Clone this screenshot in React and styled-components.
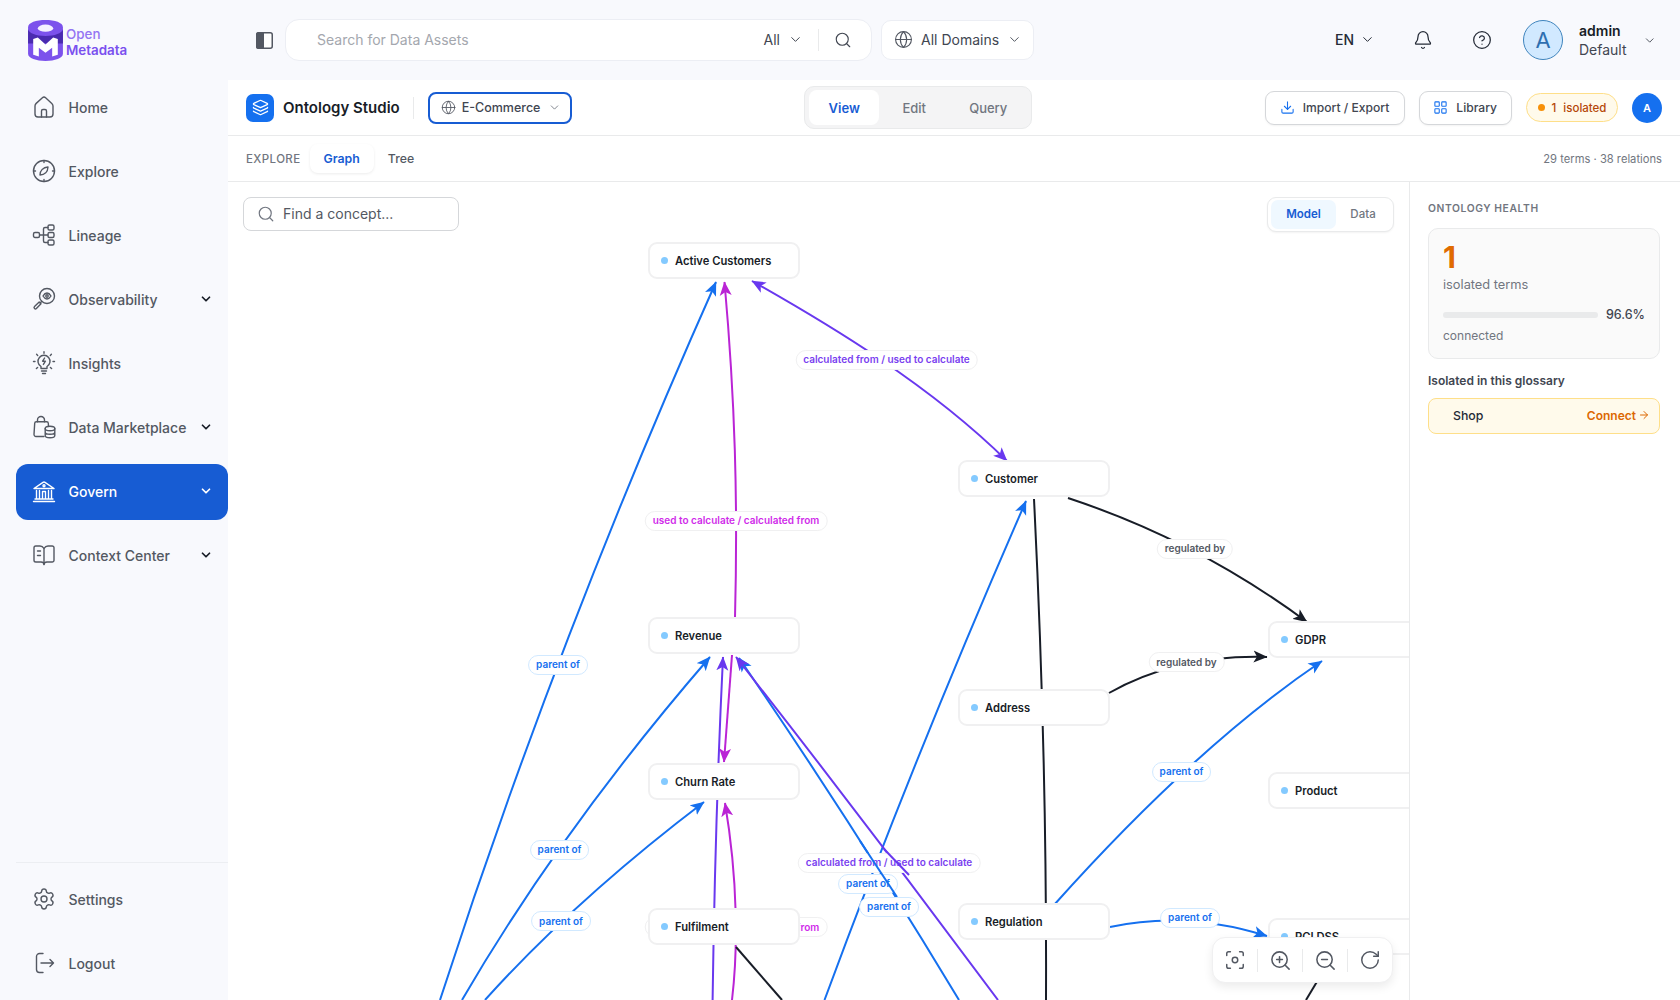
import React from "react";
import styled, { createGlobalStyle } from "styled-components";
import {
  ArrowRight,
  ChevronDown,
  CircleHelp,
  Download,
  Focus,
  Globe,
  Bell,
  Layers,
  LayoutGrid,
  RotateCw,
  Search,
  Settings,
  ZoomIn,
  ZoomOut,
} from "lucide-react";

const BLUE = "#1570ef";
const PURPLE = "#6938ef";
const MAGENTA = "#ba24d5";
const INK = "#181d27";

// graph coordinates are page pixels, the canvas starts here
const ORIGIN_X = 228;
const ORIGIN_Y = 182;

const GlobalStyle = createGlobalStyle`
  html, body {
    margin: 0;
    padding: 0;
    background: #f8f9fd;
    font-family: Inter, "Noto Sans", sans-serif;
    color: ${INK};
  }
  * { box-sizing: border-box; }
`;

const Shell = styled.div`
  display: flex;
  width: 1680px;
  height: 1000px;
  overflow: hidden;
  background: #f8f9fd;
`;

const Sidebar = styled.aside`
  width: 228px;
  flex: none;
  display: flex;
  flex-direction: column;
  padding-bottom: 9px;
`;

const Brand = styled.div`
  height: 80px;
  display: flex;
  align-items: center;
  gap: 3px;
  padding-left: 28px;
  flex: none;
`;

const BrandText = styled.div`
  display: flex;
  flex-direction: column;
  margin-top: 3px;
  font-size: 13.4px;
  line-height: 16px;
  font-weight: 600;
  color: #7a50ef;
  & > span:first-child { color: #9474f3; font-weight: 500; }
`;

const NavList = styled.nav`
  flex: 1;
  display: flex;
  flex-direction: column;
  gap: 8px;
  padding-left: 16px;
`;

const FootList = styled(NavList)`
  flex: none;
  padding-left: 0;
  padding-top: 8px;
  margin-left: 16px;
  border-top: 1px solid #eceef2;
`;

const NavItem = styled.a`
  height: 56px;
  flex: none;
  display: flex;
  align-items: center;
  gap: 12.5px;
  padding: 0 15px ${(p) => p.$lift || 0}px 16px;
  border-radius: 12px;
  font-size: 14px;
  font-weight: 500;
  color: ${(p) => (p.$active ? "#fff" : "#535862")};
  background: ${(p) => (p.$active ? "#175cd3" : "transparent")};
  & > svg { flex: none; }
  & > svg:last-child:not(:first-child) {
    margin-left: auto;
    color: ${(p) => (p.$active ? "#fff" : INK)};
  }
`;

const Column = styled.div`
  flex: 1;
  min-width: 0;
  display: flex;
  flex-direction: column;
`;

const TopBar = styled.header`
  height: 80px;
  flex: none;
  display: flex;
  align-items: center;
  padding: 0 24px 0 28px;
`;

const PanelToggle = styled.span`
  display: flex;
  margin-right: 12px;
`;

const SearchBox = styled.div`
  width: 587px;
  height: 42px;
  display: flex;
  align-items: center;
  padding: 0 19px 0 31px;
  background: #fff;
  border: 1px solid #eceef4;
  border-radius: 14px;
  font-size: 14px;
`;

const Placeholder = styled.span`
  color: #a4a7ae;
  margin-right: auto;
  padding-bottom: 2px;
`;

const ScopeSelect = styled.span`
  display: flex;
  align-items: center;
  gap: 8px;
  color: #414651;
  padding: 0 15px 2px 0;
  border-right: 1px solid #e9eaeb;
  height: 22px;
  margin-right: 15px;
`;

const DomainSelect = styled.div`
  width: 153px;
  height: 40px;
  margin-left: 9px;
  display: flex;
  align-items: center;
  gap: 8px;
  padding: 0 0 2px 12px;
  background: #fff;
  border: 1px solid #eceef4;
  border-radius: 10px;
  font-size: 14px;
  color: #414651;
`;

const TopRight = styled.div`
  margin-left: auto;
  display: flex;
  align-items: center;
  gap: 23px;
`;

const LangSelect = styled.span`
  width: 47px;
  display: flex;
  align-items: center;
  gap: 6px;
  padding-bottom: 2px;
  font-size: 14px;
  font-weight: 500;
  color: #252b37;
`;

const IconButton = styled.span`
  width: 36px;
  display: flex;
  justify-content: center;
  color: #252b37;
`;

const UserBlock = styled.div`
  width: 133px;
  display: flex;
  align-items: center;
  gap: 16px;
  & > svg:last-child { margin-left: auto; color: #414651; }
`;

const UserAvatar = styled.span`
  width: 40px;
  height: 40px;
  flex: none;
  display: flex;
  align-items: center;
  justify-content: center;
  border-radius: 50%;
  background: #d1e9ff;
  border: 1px solid #3f84bd;
  color: #2e6fb0;
  font-size: 22px;
`;

const UserName = styled.div`
  font-size: 14px;
  line-height: 19px;
  color: #414651;
  & > strong { display: block; font-weight: 600; color: ${INK}; }
`;

const Main = styled.main`
  flex: 1;
  min-height: 0;
  display: flex;
  flex-direction: column;
  background: #fff;
`;

const Toolbar = styled.div`
  height: 56px;
  flex: none;
  display: flex;
  align-items: center;
  justify-content: space-between;
  padding: 0 18px;
  border-bottom: 1px solid #e9eaeb;
`;

const ToolGroup = styled.div`
  display: flex;
  align-items: center;
  gap: ${(p) => p.$gap || 14}px;
`;

const StudioMark = styled.span`
  width: 28px;
  height: 28px;
  display: flex;
  align-items: center;
  justify-content: center;
  border-radius: 7px;
  background: ${BLUE};
  color: #fff;
  margin-right: -5px;
`;

const StudioTitle = styled.h1`
  margin: 0;
  padding-right: 13px;
  border-right: 1px solid #e9eaeb;
  font-size: 15px;
  line-height: 22px;
  font-weight: 600;
  color: ${INK};
`;

const GlossarySelect = styled.div`
  width: 144px;
  height: 32px;
  display: flex;
  align-items: center;
  gap: 6px;
  padding-left: 11px;
  border: 2px solid #175cd3;
  border-radius: 8px;
  font-size: 12.5px;
  font-weight: 500;
  color: #414651;
  & > svg:last-child { margin-left: 2px; color: #717680; }
`;

const ModeTabs = styled.div`
  width: 228px;
  height: 43px;
  display: flex;
  align-items: center;
  padding: 0 4px;
  background: #f4f4f5;
  border: 1px solid #e9eaeb;
  border-radius: 10px;
`;

const ModeTab = styled.span`
  width: ${(p) => p.$w}px;
  height: 35px;
  display: flex;
  align-items: center;
  justify-content: center;
  border-radius: 8px;
  font-size: 13px;
  font-weight: ${(p) => (p.$active ? 600 : 500)};
  color: ${(p) => (p.$active ? "#175cd3" : "#717680")};
  background: ${(p) => (p.$active ? "#fff" : "transparent")};
`;

const ActionButton = styled.button`
  height: 34px;
  display: flex;
  align-items: center;
  gap: 8px;
  padding: 0 14px 0 13px;
  background: #fff;
  border: 1px solid #d5d7da;
  border-radius: 9px;
  font-family: inherit;
  font-size: 12.1px;
  font-weight: 500;
  color: #414651;
  box-shadow: 0 1px 2px rgba(10, 13, 18, 0.05);
  & > svg { color: ${BLUE}; }
`;

const ImportButton = styled(ActionButton)`
  padding: 0 15px 0 14px;
`;

const IsolatedBadge = styled.span`
  height: 29px;
  width: 92px;
  display: flex;
  align-items: center;
  justify-content: center;
  gap: 7px;
  border: 1px solid #fedf89;
  border-radius: 15px;
  background: #fffaeb;
  font-size: 11.5px;
  font-weight: 500;
  word-spacing: 4px;
  color: #b54708;
  & > i { width: 7px; height: 7px; border-radius: 50%; background: #f79009; }
`;

const MiniAvatar = styled.span`
  width: 30px;
  height: 30px;
  display: flex;
  align-items: center;
  justify-content: center;
  border-radius: 50%;
  background: ${BLUE};
  color: #fff;
  font-size: 11px;
  font-weight: 600;
`;

const SubBar = styled.div`
  height: 46px;
  flex: none;
  display: flex;
  align-items: center;
  padding: 0 18px;
  border-bottom: 1px solid #e9eaeb;
  font-size: 12px;
`;

const SubLabel = styled.span`
  font-size: 11.5px;
  font-weight: 500;
  letter-spacing: 0.4px;
  color: #717680;
  margin-right: 9px;
`;

const SubTab = styled.span`
  height: 29px;
  padding: 0 14px;
  display: flex;
  align-items: center;
  border-radius: 8px;
  font-size: 12.3px;
  font-weight: ${(p) => (p.$active ? 600 : 500)};
  color: ${(p) => (p.$active ? "#175cd3" : "#535862")};
  box-shadow: ${(p) => (p.$active ? "0 1px 3px rgba(10, 13, 18, 0.08)" : "none")};
`;

const Stats = styled.span`
  margin-left: auto;
  color: #717680;
  font-size: 11.2px;
`;

const Body = styled.div`
  flex: 1;
  min-height: 0;
  display: flex;
`;

const Canvas = styled.section`
  position: relative;
  flex: 1;
  min-width: 0;
  overflow: hidden;
  background: #fff;
`;

const EdgeLayer = styled.svg`
  position: absolute;
  left: 0;
  top: 0;
`;

const ConceptSearch = styled.div`
  position: absolute;
  z-index: 3;
  left: 15px;
  top: 15px;
  width: 216px;
  height: 34px;
  display: flex;
  align-items: center;
  gap: 8px;
  padding: 0 0 2px 13px;
  background: #fff;
  border: 1.5px solid #d5d7da;
  border-radius: 8px;
  font-size: 14px;
  color: #535862;
  & > svg { color: #717680; margin-top: 2px; }
`;

const ViewToggle = styled.div`
  position: absolute;
  z-index: 3;
  right: 15px;
  top: 15px;
  width: 127px;
  height: 35px;
  display: flex;
  align-items: center;
  padding: 0 3px;
  background: #fff;
  border: 1px solid #e9eaeb;
  border-radius: 9px;
  box-shadow: 0 1px 2px rgba(10, 13, 18, 0.05);
`;

const ViewOption = styled.span`
  flex: ${(p) => (p.$active ? "0 0 65px" : 1)};
  height: 29px;
  display: flex;
  align-items: center;
  justify-content: center;
  padding-bottom: 2px;
  border-radius: 7px;
  font-size: 11.5px;
  font-weight: ${(p) => (p.$active ? 600 : 500)};
  color: ${(p) => (p.$active ? "#175cd3" : "#717680")};
  background: ${(p) => (p.$active ? "#eff8ff" : "transparent")};
`;

const GraphNode = styled.div`
  position: absolute;
  left: ${(p) => p.$x - ORIGIN_X}px;
  top: ${(p) => p.$y - ORIGIN_Y}px;
  width: 152px;
  height: 37px;
  display: flex;
  align-items: center;
  gap: 7px;
  padding-left: 11px;
  background: #fff;
  border: 2px solid #f0f0f1;
  border-radius: 9px;
  font-size: 11.2px;
  font-weight: 600;
  color: ${INK};
  &::before {
    content: "";
    width: 7px;
    height: 7px;
    border-radius: 50%;
    background: #84caff;
  }
`;

const EdgeLabel = styled.span`
  position: absolute;
  left: ${(p) => p.$x - ORIGIN_X}px;
  top: ${(p) => p.$y - ORIGIN_Y}px;
  transform: translate(-50%, -50%);
  height: 20px;
  padding: 0 7px 1px;
  display: flex;
  align-items: center;
  white-space: nowrap;
  background: #fff;
  border: 1px solid ${(p) => (p.$color === BLUE ? "#d1e9ff" : "#f0f0f1")};
  border-radius: 10px;
  font-size: 10px;
  font-weight: 600;
  color: ${(p) => p.$color};
`;

const ZoomBar = styled.div`
  position: absolute;
  z-index: 3;
  left: 984px;
  top: 755px;
  width: 181px;
  height: 46px;
  display: flex;
  align-items: center;
  background: #fff;
  border: 1px solid #f0f0f1;
  border-radius: 13px;
  box-shadow: 0 4px 10px rgba(10, 13, 18, 0.08);
`;

const ZoomButton = styled.span`
  flex: 1;
  height: 23px;
  display: flex;
  align-items: center;
  justify-content: center;
  color: #535862;
  & + & { border-left: 1px solid #e9eaeb; }
`;

const HealthPanel = styled.aside`
  width: 271px;
  flex: none;
  padding: 20px 20px 0 18px;
  border-left: 1px solid #e9eaeb;
`;

const PanelTitle = styled.h2`
  margin: 0 0 13px;
  font-size: 10.3px;
  line-height: 13px;
  font-weight: 600;
  letter-spacing: 0.6px;
  color: #717680;
`;

const HealthCard = styled.div`
  height: 131px;
  padding: 12px 14px;
  background: #fafafa;
  border: 1px solid #e9eaeb;
  border-radius: 10px;
`;

const BigCount = styled.div`
  font-size: 30px;
  line-height: 32px;
  font-weight: 700;
  color: #e06b00;
`;

const HealthNote = styled.div`
  font-size: ${(p) => p.$size || 12}px;
  line-height: 16px;
  color: #717680;
  margin-top: ${(p) => p.$top || 0}px;
`;

const BarRow = styled.div`
  display: flex;
  align-items: center;
  gap: 8px;
  margin-top: 14px;
  font-size: 12.5px;
  font-weight: 500;
  color: #414651;
`;

const BarTrack = styled.div`
  width: 157px;
  height: 6px;
  border-radius: 3px;
  background: #e9eaeb;
`;

const IsolatedTitle = styled.h3`
  margin: 14px 0 9px;
  font-size: 12px;
  line-height: 16px;
  font-weight: 600;
  color: #414651;
`;

const IsolatedRow = styled.div`
  height: 36px;
  display: flex;
  align-items: center;
  justify-content: space-between;
  padding: 0 9px 2px 24px;
  background: #fffaeb;
  border: 1px solid #fedf89;
  border-radius: 8px;
  font-size: 12.3px;
  font-weight: 500;
  color: #252b37;
`;

const ConnectLink = styled.a`
  display: flex;
  align-items: center;
  gap: 2px;
  font-size: 12px;
  font-weight: 600;
  color: #dc6803;
`;

const Icon = ({ children, size = 24, width = 1.4 }) => (
  <svg width={size} height={size} viewBox="0 0 24 24" fill="none" stroke="currentColor" strokeWidth={width} strokeLinecap="round" strokeLinejoin="round">
    {children}
  </svg>
);

const HomeIcon = () => (
  <Icon>
    <path d="M3 11c0-1 .4-1.9 1.2-2.6l6.2-5.6a2.4 2.4 0 0 1 3.2 0l6.2 5.6C20.600 9.100 21 10 21 11v8a3 3 0 0 1-3 3H6a3 3 0 0 1-3-3z" />
    <path d="M9.500 22v-6a1.500 1.500 0 0 1 1.500-1.500h2a1.500 1.500 0 0 1 1.500 1.500v6" />
  </Icon>
);

const ExploreIcon = () => (
  <Icon>
    <circle cx="12" cy="12" r="10.500" />
    <path d="M12 1.500v2M12 20.500v2M1.500 12h2M20.500 12h2" />
    <path d="M8 16c0-4.400 3.200-7.600 8-8 -.2 4.800-3.400 8-8 8z" />
  </Icon>
);

const LineageIcon = () => (
  <Icon>
    <rect x="1.500" y="9.500" width="6" height="5" rx="1.500" />
    <rect x="16" y="2" width="6" height="5" rx="1.500" />
    <rect x="16" y="9.500" width="6" height="5" rx="1.500" />
    <rect x="16" y="17" width="6" height="5" rx="1.500" />
    <path d="M7.500 12H16M11.500 12V6c0-1 .6-1.500 1.500-1.500h3M11.500 12v6c0 1 .6 1.500 1.500 1.500h3" />
  </Icon>
);

const ObservabilityIcon = () => (
  <Icon>
    <circle cx="15" cy="9" r="7.500" />
    <path d="M11 9c1.200-2 2.600-3 4-3s2.800 1 4 3c-1.200 2-2.600 3-4 3s-2.800-1-4-3z" />
    <circle cx="15" cy="9" r="1.200" />
    <path d="M9.800 14.300l-1.600 1.600" />
    <path d="M7.200 15l1.800 1.800-4.600 4.700a1.300 1.300 0 0 1-1.900-1.900z" />
  </Icon>
);

const InsightsIcon = () => (
  <Icon>
    <path d="M9 15.500a6 6 0 1 1 6 0v2H9z" />
    <path d="M9.500 20h5M10.500 22.500h3" />
    <path d="M12.600 7l-2 3.200h2.800l-2 3.200" />
    <path d="M12 .8v1.500M4.600 3.300l1.100 1.100M19.400 3.300l-1.100 1.100M1.500 10.500H3M21 10.500h1.500M4.400 17.500l1.200-1.100M19.600 17.500l-1.200-1.100" />
  </Icon>
);

const MarketplaceIcon = () => (
  <Icon>
    <path d="M12 21.500H4a2 2 0 0 1-2-2.100l.7-11.100a1.600 1.600 0 0 1 1.600-1.500h10.400a1.600 1.600 0 0 1 1.600 1.500l.2 2.700" />
    <path d="M5.500 6.800V5a3.500 3.500 0 0 1 7 0v1.800" />
    <ellipse cx="18" cy="13.500" rx="4.800" ry="2.200" />
    <path d="M13.200 13.500v7c0 1.200 2.100 2.200 4.800 2.200s4.800-1 4.800-2.200v-7M13.200 17c0 1.200 2.100 2.200 4.800 2.200s4.800-1 4.800-2.200" />
  </Icon>
);

const GovernIcon = () => (
  <Icon>
    <path d="M2 9.500L11 3.400a1.800 1.800 0 0 1 2 0l9 6.100z" />
    <circle cx="12" cy="6.800" r="1" />
    <path d="M1.500 22.500h21M3 20h18M4.500 11.500V20M7.500 11.500V20M16.500 11.500V20M19.500 11.500V20M10.500 20v-7.500h3V20" />
  </Icon>
);

const ContextIcon = () => (
  <Icon>
    <path d="M12 5.500C11 3.800 9.500 3 8 3H3.800A1.800 1.800 0 0 0 2 4.800v12.400A1.800 1.800 0 0 0 3.800 19H9c1.500 0 3 .9 3 2.500 0-1.600 1.500-2.500 3-2.500h5.200a1.800 1.800 0 0 0 1.800-1.800V4.800A1.800 1.800 0 0 0 20.200 3H16c-1.500 0-3 .8-4 2.500z" />
    <path d="M12 5.500v16M5.500 8h3M5.500 12.500h3" />
  </Icon>
);

const LogoutIcon = () => (
  <Icon>
    <path d="M11 2.500H7.500a3 3 0 0 0-3 3v13a3 3 0 0 0 3 3H11" />
    <path d="M9 12h12.500M18 8.500l3.500 3.500-3.500 3.500" />
  </Icon>
);

const PanelIcon = () => (
  <svg width="17" height="17" viewBox="0 0 17 17">
    <rect x=".75" y=".75" width="15.500" height="15.500" rx="2" fill="#fff" stroke="#535862" strokeWidth="1.500" />
    <path d="M2.500 0H8v17H2.500A2.500 2.500 0 0 1 0 14.500v-12A2.500 2.500 0 0 1 2.500 0z" fill="#535862" />
  </svg>
);

const LogoMark = () => (
  <svg width="35" height="41" viewBox="0 0 34 40">
    <path d="M0 7C0 2.500 8 0 17 0s17 2.500 17 7v26c0 4.500-8 7-17 7S0 37.500 0 33z" fill="#7c52ec" />
    <path d="M0 9c1 4 8 6.500 17 6.500S33 13 34 9v14H0z" fill="#4a2bb0" />
    <ellipse cx="17" cy="8" rx="7.500" ry="3.500" fill="#f4f0ff" />
    <path d="M5 18.500l4.500-1.500L17 24l7.500-7 4.500 1.500V34l-5.500 1.500V27L17 32l-6.500-5v8.500L5 34z" fill="#fff" />
  </svg>
);

const NAV_ITEMS = [
  { label: "Home", icon: HomeIcon },
  { label: "Explore", icon: ExploreIcon },
  { label: "Lineage", icon: LineageIcon },
  { label: "Observability", icon: ObservabilityIcon, more: true },
  { label: "Insights", icon: InsightsIcon },
  { label: "Data Marketplace", icon: MarketplaceIcon, more: true },
  { label: "Govern", icon: GovernIcon, more: true, active: true },
  { label: "Context Center", icon: ContextIcon, more: true },
];

const EDGES = [
  { d: "M440 1000Q556 641 716 282", color: BLUE, end: true },
  { d: "M735 618C738 500 735 400 724.500 282", color: MAGENTA, end: true },
  { d: "M752 281C830 325 930 385 1007 461", color: PURPLE, start: true, end: true },
  { d: "M824.500 1000Q917 750 1026 501", color: BLUE, end: true },
  { d: "M1034 499Q1047 760 1046 1000", color: INK },
  { d: "M1068 498C1150 525 1230 565 1307 622", color: INK, end: true },
  { d: "M1109 693C1150 670 1200 655 1267 657", color: INK, end: true },
  { d: "M1054 905C1130 820 1220 730 1322 661", color: BLUE, end: true },
  { d: "M1110 927C1160 916 1210 918 1267 936", color: BLUE, end: true },
  { d: "M462 1000Q562 828 710 657", color: BLUE, end: true },
  { d: "M485 1000Q575 900 704 802", color: BLUE, end: true },
  { d: "M712.600 1000C714 900 716 800 723 657", color: PURPLE, end: true },
  { d: "M732 655Q728 710 724 762", color: MAGENTA, end: true },
  { d: "M732 1000C738 950 738 880 725 803", color: MAGENTA, end: true },
  { d: "M959 1000Q855.500 828 739 658", color: BLUE, end: true },
  { d: "M998 1000Q869.500 827 736 657", color: PURPLE, end: true },
  { d: "M736 947L782 1000", color: INK },
  { d: "M1306 1000L1330 960", color: INK },
];

// these two run over the labels, the rest run under them
const OVER_LABELS = [
  { d: "M860 841L897 897", color: BLUE },
  { d: "M884 849L909 875", color: PURPLE },
];

const USED_BY = "used to calculate / calculated from";
const CALC_FROM = "calculated from / used to calculate";

const LABELS = [
  { text: USED_BY, x: 736, y: 520.5, color: "#d02bea" },
  { text: USED_BY, x: 736, y: 927, color: "#d02bea" },
  { text: CALC_FROM, x: 886.5, y: 359.5, color: "#7a3ff0" },
  { text: CALC_FROM, x: 889, y: 862.5, color: "#7a3ff0" },
  { text: "parent of", x: 558, y: 664.5, color: BLUE },
  { text: "parent of", x: 559.5, y: 849.5, color: BLUE },
  { text: "parent of", x: 561, y: 921, color: BLUE },
  { text: "parent of", x: 868, y: 883.5, color: BLUE },
  { text: "regulated by", x: 1195, y: 548.5, color: "#535862" },
  { text: "regulated by", x: 1186.5, y: 662, color: "#535862" },
  { text: "parent of", x: 1181.5, y: 771.5, color: BLUE },
  { text: "parent of", x: 1190, y: 917.5, color: BLUE },
];

const NODES = [
  { name: "Active Customers", x: 648, y: 242 },
  { name: "Revenue", x: 648, y: 617 },
  { name: "Churn Rate", x: 648, y: 763 },
  { name: "Fulfilment", x: 648, y: 908 },
  { name: "Customer", x: 958, y: 460 },
  { name: "Address", x: 958, y: 689 },
  { name: "Regulation", x: 958, y: 903 },
  { name: "GDPR", x: 1268, y: 621 },
  { name: "Product", x: 1268, y: 772 },
  { name: "PCI DSS", x: 1268, y: 918 },
];

const markerId = (color) => `arrow-${color.slice(1)}`;

const Arrow = ({ color }) => (
  <marker id={markerId(color)} markerUnits="userSpaceOnUse" markerWidth="15" markerHeight="13" refX="13.500" refY="6.500" orient="auto-start-reverse">
    <path d="M0 .5L14 6.500 0 12.500 3.500 6.500z" fill={color} />
  </marker>
);

const Edges = ({ items }) => (
  <EdgeLayer width={1181} height={818} viewBox={`${ORIGIN_X} ${ORIGIN_Y} 1181 818`} fill="none">
    <defs>
      {[BLUE, PURPLE, MAGENTA, INK].map((c) => (
        <Arrow key={c} color={c} />
      ))}
    </defs>
    {items.map((e) => (
      <path
        key={e.d}
        d={e.d}
        stroke={e.color}
        strokeWidth="2"
        markerStart={e.start ? `url(#${markerId(e.color)})` : undefined}
        markerEnd={e.end ? `url(#${markerId(e.color)})` : undefined}
      />
    ))}
  </EdgeLayer>
);

export default function App() {
  return (
    <Shell>
      <GlobalStyle />
      <Sidebar>
        <Brand>
          <LogoMark />
          <BrandText>
            <span>Open</span>
            <span>Metadata</span>
          </BrandText>
        </Brand>
        <NavList>
          {NAV_ITEMS.map((item) => (
            <NavItem key={item.label} $active={item.active} $lift={2}>
              <item.icon />
              {item.label}
              {item.more && <ChevronDown size={14} strokeWidth={3} />}
            </NavItem>
          ))}
        </NavList>
        <FootList>
          <NavItem>
            <Settings size={24} strokeWidth={1.4} />
            Settings
          </NavItem>
          <NavItem>
            <LogoutIcon />
            Logout
          </NavItem>
        </FootList>
      </Sidebar>

      <Column>
        <TopBar>
          <PanelToggle>
            <PanelIcon />
          </PanelToggle>
          <SearchBox>
            <Placeholder>Search for Data Assets</Placeholder>
            <ScopeSelect>
              All <ChevronDown size={15} strokeWidth={1.6} />
            </ScopeSelect>
            <Search size={18} strokeWidth={1.5} color="#414651" />
          </SearchBox>
          <DomainSelect>
            <Globe size={19} strokeWidth={1.4} color="#535862" />
            All Domains
            <ChevronDown size={15} strokeWidth={1.6} color="#535862" />
          </DomainSelect>
          <TopRight>
            <LangSelect>
              EN <ChevronDown size={15} strokeWidth={1.6} />
            </LangSelect>
            <IconButton>
              <Bell size={20} strokeWidth={1.5} />
            </IconButton>
            <IconButton>
              <CircleHelp size={20} strokeWidth={1.5} />
            </IconButton>
            <UserBlock>
              <UserAvatar>A</UserAvatar>
              <UserName>
                <strong>admin</strong>
                Default
              </UserName>
              <ChevronDown size={15} strokeWidth={1.6} />
            </UserBlock>
          </TopRight>
        </TopBar>

        <Main>
          <Toolbar>
            <ToolGroup>
              <StudioMark>
                <Layers size={17} strokeWidth={1.8} />
              </StudioMark>
              <StudioTitle>Ontology Studio</StudioTitle>
              <GlossarySelect>
                <Globe size={15} strokeWidth={1.4} color="#535862" />
                E-Commerce
                <ChevronDown size={13} strokeWidth={1.6} />
              </GlossarySelect>
            </ToolGroup>
            <ModeTabs>
              <ModeTab $w={70} $active>View</ModeTab>
              <ModeTab $w={70}>Edit</ModeTab>
              <ModeTab $w={78}>Query</ModeTab>
            </ModeTabs>
            <ToolGroup>
              <ImportButton>
                <Download size={15} strokeWidth={1.7} />
                Import / Export
              </ImportButton>
              <ActionButton>
                <LayoutGrid size={15} strokeWidth={1.7} />
                Library
              </ActionButton>
              <IsolatedBadge>
                <i />1 isolated
              </IsolatedBadge>
              <MiniAvatar>A</MiniAvatar>
            </ToolGroup>
          </Toolbar>

          <SubBar>
            <SubLabel>EXPLORE</SubLabel>
            <SubTab $active>Graph</SubTab>
            <SubTab>Tree</SubTab>
            <Stats>29 terms · 38 relations</Stats>
          </SubBar>

          <Body>
            <Canvas>
              <Edges items={EDGES} />
              {LABELS.map((l) => (
                <EdgeLabel key={`${l.text}-${l.x}`} $x={l.x} $y={l.y} $color={l.color}>
                  {l.text}
                </EdgeLabel>
              ))}
              <Edges items={OVER_LABELS} />
              <EdgeLabel $x={889} $y={906.5} $color={BLUE}>parent of</EdgeLabel>
              {NODES.map((n) => (
                <GraphNode key={n.name} $x={n.x} $y={n.y}>
                  {n.name}
                </GraphNode>
              ))}
              <ConceptSearch>
                <Search size={18} strokeWidth={1.6} />
                Find a concept...
              </ConceptSearch>
              <ViewToggle>
                <ViewOption $active>Model</ViewOption>
                <ViewOption>Data</ViewOption>
              </ViewToggle>
              <ZoomBar>
                <ZoomButton>
                  <Focus size={22} strokeWidth={1.6} />
                </ZoomButton>
                <ZoomButton>
                  <ZoomIn size={23} strokeWidth={1.6} />
                </ZoomButton>
                <ZoomButton>
                  <ZoomOut size={23} strokeWidth={1.6} />
                </ZoomButton>
                <ZoomButton>
                  <RotateCw size={22} strokeWidth={1.6} />
                </ZoomButton>
              </ZoomBar>
            </Canvas>

            <HealthPanel>
              <PanelTitle>ONTOLOGY HEALTH</PanelTitle>
              <HealthCard>
                <BigCount>1</BigCount>
                <HealthNote $top={4} $size={12.8}>isolated terms</HealthNote>
                <BarRow>
                  <BarTrack />
                  96.6%
                </BarRow>
                <HealthNote $top={6}>connected</HealthNote>
              </HealthCard>
              <IsolatedTitle>Isolated in this glossary</IsolatedTitle>
              <IsolatedRow>
                Shop
                <ConnectLink>
                  Connect <ArrowRight size={12} strokeWidth={2} />
                </ConnectLink>
              </IsolatedRow>
            </HealthPanel>
          </Body>
        </Main>
      </Column>
    </Shell>
  );
}
